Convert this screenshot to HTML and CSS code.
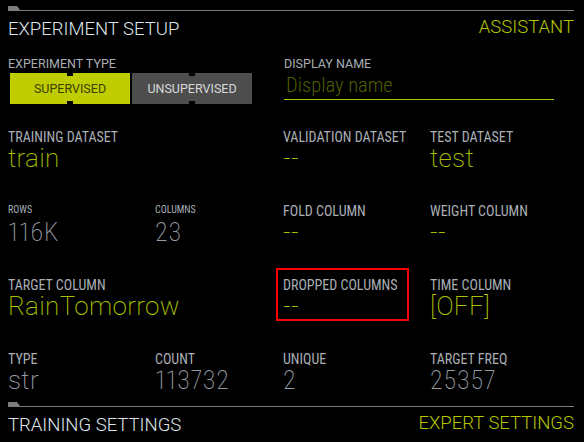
FILE: index.html
```html
<!DOCTYPE html>
<html lang="en">
<head>
<meta charset="utf-8">
<title>Experiment Setup</title>
<link rel="stylesheet" href="styles.css">
</head>
<body>
<main class="panel">
  <header class="section-head">
    <h1 class="section-title">EXPERIMENT SETUP</h1>
    <a class="section-link assistant">ASSISTANT</a>
  </header>

  <section class="setup-row">
    <div class="field type-field">
      <div class="label label-sm">EXPERIMENT TYPE</div>
      <div class="toggle">
        <button class="toggle-btn active">SUPERVISED</button>
        <button class="toggle-btn">UNSUPERVISED</button>
      </div>
    </div>
    <div class="field name-field">
      <div class="label label-sm">DISPLAY NAME</div>
      <input class="name-input" type="text" placeholder="Display name">
    </div>
  </section>

  <section class="grid">
    <div class="cell span2">
      <div class="label">TRAINING DATASET</div>
      <div class="value accent">train</div>
    </div>
    <div class="cell">
      <div class="label">VALIDATION DATASET</div>
      <div class="value accent">--</div>
    </div>
    <div class="cell">
      <div class="label">TEST DATASET</div>
      <div class="value accent">test</div>
    </div>

    <div class="cell">
      <div class="label label-xs">ROWS</div>
      <div class="value muted num">116K</div>
    </div>
    <div class="cell">
      <div class="label label-xs">COLUMNS</div>
      <div class="value muted num">23</div>
    </div>
    <div class="cell">
      <div class="label">FOLD COLUMN</div>
      <div class="value accent">--</div>
    </div>
    <div class="cell">
      <div class="label">WEIGHT COLUMN</div>
      <div class="value accent">--</div>
    </div>

    <div class="cell span2">
      <div class="label">TARGET COLUMN</div>
      <div class="value accent">RainTomorrow</div>
    </div>
    <div class="cell flagged">
      <div class="label">DROPPED COLUMNS</div>
      <div class="value accent">--</div>
    </div>
    <div class="cell">
      <div class="label">TIME COLUMN</div>
      <div class="value accent">[OFF]</div>
    </div>

    <div class="cell">
      <div class="label">TYPE</div>
      <div class="value muted">str</div>
    </div>
    <div class="cell">
      <div class="label">COUNT</div>
      <div class="value muted num">113732</div>
    </div>
    <div class="cell">
      <div class="label">UNIQUE</div>
      <div class="value muted num">2</div>
    </div>
    <div class="cell">
      <div class="label">TARGET FREQ</div>
      <div class="value muted num">25357</div>
    </div>
  </section>

  <footer class="section-head bottom">
    <h2 class="section-title">TRAINING SETTINGS</h2>
    <a class="section-link">EXPERT SETTINGS</a>
  </footer>
</main>
</body>
</html>
```
FILE: styles.css
```css
* { box-sizing: border-box; }

html, body {
  margin: 0;
  background: #000;
}

body {
  font-family: Roboto, "Liberation Sans", sans-serif;
  color: #aab0b6;
  width: 584px;
  height: 442px;
  overflow: hidden;
}

.panel {
  padding: 10px 10px 0 8px;
  display: flex;
  flex-direction: column;
}

/* section header with tabbed rule */
.section-head {
  position: relative;
  border-top: 1px solid #7c7c7c;
  padding-top: 6px;
  display: flex;
  justify-content: space-between;
  align-items: flex-start;
}

.section-head::before {
  content: "";
  position: absolute;
  left: 0;
  top: -5px;
  width: 12px;
  height: 4px;
  background: #7c7c7c;
  clip-path: polygon(0 0, 9px 0, 12px 100%, 0 100%);
}

.section-title {
  margin: 0;
  font-size: 18.5px;
  font-weight: 300;
  line-height: 24px;
  color: #dfe4ea;
  letter-spacing: 0;
}

.section-link {
  font-size: 18.5px;
  font-weight: 300;
  line-height: 24px;
  color: #b4c600;
  margin-top: -2px;
}

.bottom {
  margin-top: 13px;
}

/* experiment type + display name row */
.setup-row {
  margin-top: 15px;
  display: grid;
  grid-template-columns: 275px 1fr;
}

.label {
  font-size: 14px;
  line-height: 15px;
  font-weight: 400;
  font-stretch: condensed;
  color: #a9afb5;
  white-space: nowrap;
}

.label-sm {
  font-size: 12.5px;
  font-stretch: normal;
}

.label-xs {
  font-size: 10px;
  line-height: 11px;
  font-stretch: semi-condensed;
}

.toggle {
  margin: 2px 0 0 2px;
  display: flex;
  gap: 2px;
}

.toggle-btn {
  position: relative;
  width: 120px;
  height: 31px;
  border: 0;
  padding: 0;
  font-family: Roboto, "Liberation Sans", sans-serif;
  font-size: 12.5px;
  font-weight: 400;
  background: #4d4d4d;
  color: #d6d9dc;
}

.toggle-btn.active {
  background: #bfcc00;
  color: #3b4000;
}

.toggle-btn::before,
.toggle-btn::after {
  content: "";
  position: absolute;
  left: 57px;
  width: 6px;
  height: 3px;
  background: #000;
}

.toggle-btn::before { top: 0; }
.toggle-btn::after { bottom: 0; }

.name-field .label { padding-left: 1px; }

.name-input {
  display: block;
  width: 270px;
  height: 29px;
  margin: 0 0 0 1px;
  padding: 0 0 0 2px;
  background: transparent;
  border: 0;
  border-bottom: 1px solid #b4c600;
  outline: none;
  font-family: Roboto, "Liberation Sans", sans-serif;
  font-size: 20.5px;
  font-weight: 300;
  font-stretch: semi-condensed;
  line-height: 28px;
  color: #b4c600;
}

.name-input::placeholder {
  color: #4f5d00;
}

/* data grid */
.grid {
  margin-top: 26px;
  display: grid;
  grid-template-columns: 147px 128px 147px 1fr;
  row-gap: 33px;
}

.cell {
  position: relative;
}

.span2 {
  grid-column: span 2;
}

.value {
  font-size: 26px;
  line-height: 26px;
  font-weight: 200;
  letter-spacing: 0.3px;
  white-space: nowrap;
}

.num {
  font-stretch: semi-condensed;
  letter-spacing: 0.9px;
  font-variant-numeric: proportional-nums;
}

.accent { color: #aac000; }
.muted { color: #959ca4; }

.label-xs + .value {
  margin-top: 4px;
}

.flagged::after {
  content: "";
  position: absolute;
  left: -7px;
  top: -10px;
  width: 129px;
  height: 49px;
  border: 2px solid #ff0000;
}
```
